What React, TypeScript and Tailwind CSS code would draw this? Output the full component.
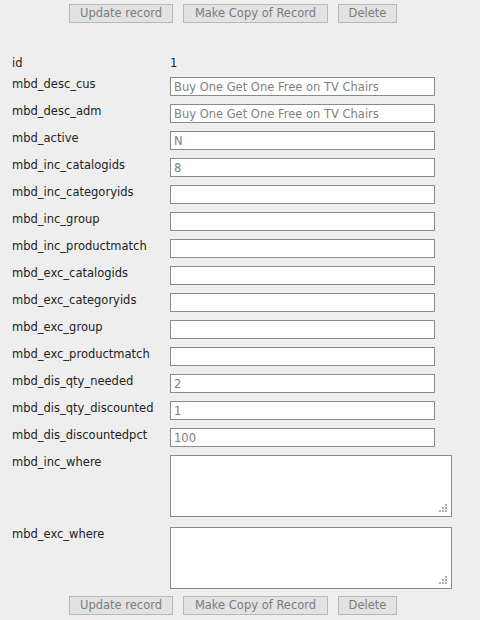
const fields: [string, string][] = [
  ["mbd_desc_cus", "Buy One Get One Free on TV Chairs"],
  ["mbd_desc_adm", "Buy One Get One Free on TV Chairs"],
  ["mbd_active", "N"],
  ["mbd_inc_catalogids", "8"],
  ["mbd_inc_categoryids", ""],
  ["mbd_inc_group", ""],
  ["mbd_inc_productmatch", ""],
  ["mbd_exc_catalogids", ""],
  ["mbd_exc_categoryids", ""],
  ["mbd_exc_group", ""],
  ["mbd_exc_productmatch", ""],
  ["mbd_dis_qty_needed", "2"],
  ["mbd_dis_qty_discounted", "1"],
  ["mbd_dis_discountedpct", "100"],
];

function Buttons() {
  const btn =
    "h-[19px] whitespace-nowrap border border-[#b8b8b8] bg-[#e2e2e2] p-0 text-[11.5px] leading-none text-[#7c7c7c]";
  return (
    <div className="flex gap-[10px] pl-[69px]">
      <button className={`${btn} w-[104px]`}>Update record</button>
      <button className={`${btn} w-[145px]`}>Make Copy of Record</button>
      <button className={`${btn} w-[59px]`}>Delete</button>
    </div>
  );
}

function Grip() {
  return (
    <svg
      width="9"
      height="9"
      viewBox="0 0 9 9"
      className="pointer-events-none absolute bottom-[4px] right-[4px]"
    >
      <g fill="#b0b0b0">
        <rect x="6" y="0" width="2" height="2" />
        <rect x="3" y="3" width="2" height="2" />
        <rect x="6" y="3" width="2" height="2" />
        <rect x="0" y="6" width="2" height="2" />
        <rect x="3" y="6" width="2" height="2" />
        <rect x="6" y="6" width="2" height="2" />
      </g>
    </svg>
  );
}

export default function App() {
  return (
    <div
      className="h-[620px] w-[480px] overflow-hidden bg-[#eeeeee] pt-[4px] text-[11.5px] text-[#222]"
      style={{ fontFamily: '"DejaVu Sans", Verdana, sans-serif' }}
    >
      <Buttons />

      <div className="mt-[32px] grid grid-cols-[158px_1fr] pl-[12px] leading-[12px]">
        {/* ID */}
        <div className="h-[22px] pt-[2px]">id</div>
        <div className="h-[22px] pt-[2px]">1</div>

        {fields.map(([label, value]) => (
          <div key={label} className="contents">
            <div className="h-[27px] pt-[1px]">{label}</div>
            <div className="h-[27px]">
              <input
                readOnly
                value={value}
                className="h-[19px] w-[265px] border border-[#8a8a8a] bg-white px-[3px] text-[11.5px] text-[#808080] outline-none"
              />
            </div>
          </div>
        ))}

        {["mbd_inc_where", "mbd_exc_where"].map((label) => (
          <div key={label} className="contents">
            <div className="h-[72px] pt-[1px]">{label}</div>
            <div className="h-[72px]">
              <div className="relative h-[62px] w-[282px]">
                <textarea
                  readOnly
                  className="block h-full w-full resize-none border border-[#8a8a8a] bg-white outline-none"
                />
                <Grip />
              </div>
            </div>
          </div>
        ))}
      </div>

      <div className="-mt-[3px]">
        <Buttons />
      </div>
    </div>
  );
}
